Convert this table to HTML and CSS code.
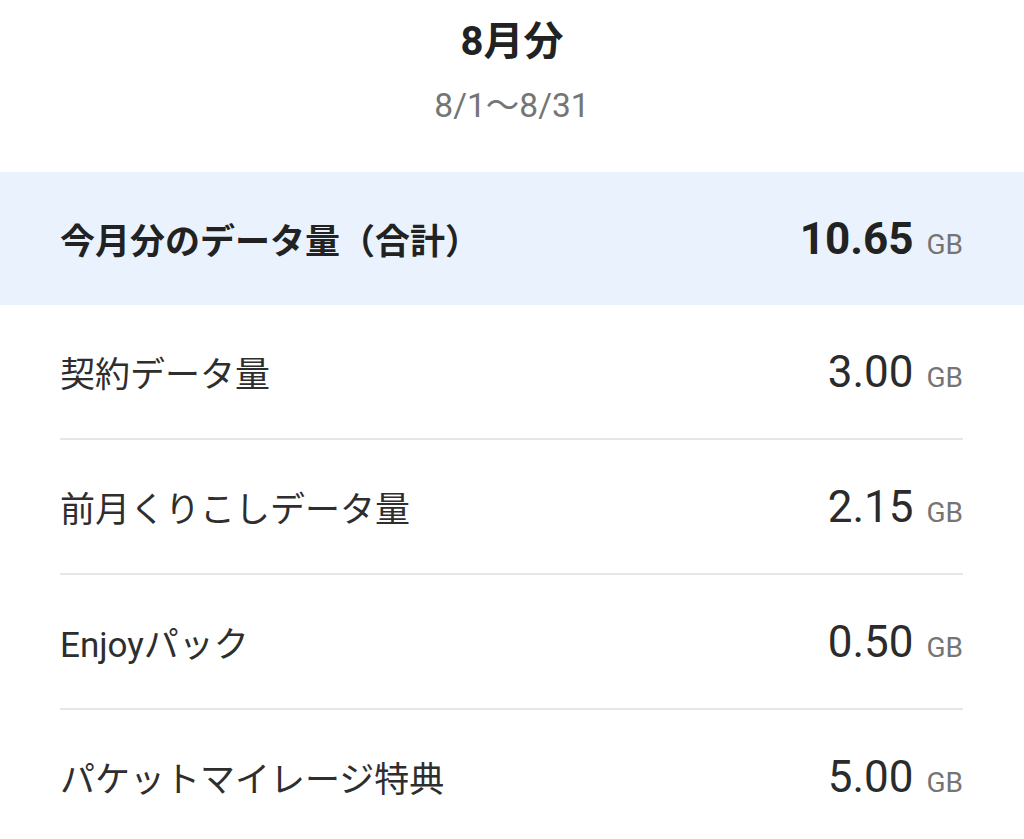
FILE: index.html
```html
<!DOCTYPE html>
<html lang="ja">
<head>
<meta charset="utf-8">
<link rel="stylesheet" href="styles.css">
</head>
<body>
<div class="page">
  <header class="head">
    <h1 class="title">8月分</h1>
    <p class="range">8/1〜8/31</p>
  </header>
  <div class="total">
    <span class="label-bold">今月分のデータ量（合計）</span>
    <span class="value"><b class="num-bold">10.65</b><span class="unit">GB</span></span>
  </div>
  <ul class="list">
    <li class="row"><span class="label">契約データ量</span><span class="value"><span class="num">3.00</span><span class="unit">GB</span></span></li>
    <li class="row"><span class="label">前月くりこしデータ量</span><span class="value"><span class="num">2.15</span><span class="unit">GB</span></span></li>
    <li class="row"><span class="label">Enjoyパック</span><span class="value"><span class="num">0.50</span><span class="unit">GB</span></span></li>
    <li class="row"><span class="label">パケットマイレージ特典</span><span class="value"><span class="num">5.00</span><span class="unit">GB</span></span></li>
  </ul>
</div>
</body>
</html>
```

FILE: styles.css
```css
html, body {
  margin: 0;
  padding: 0;
  background: #ffffff;
}
body {
  font-family: Roboto, "Noto Sans CJK JP", sans-serif;
  color: #2b2b2b;
  width: 1024px;
  height: 839px;
  overflow: hidden;
}
.head {
  display: flex;
  flex-direction: column;
  align-items: center;
  padding-top: 18px;
}
.title {
  margin: 0;
  font-size: 40px;
  line-height: 48px;
  font-weight: 700;
  color: #222;
}
.range {
  margin: 20px 0 0;
  font-size: 33.5px;
  line-height: 40px;
  color: #757575;
}
.total {
  margin-top: 46px;
  height: 133px;
  background: #eaf3fd;
  display: flex;
  align-items: center;
  justify-content: space-between;
  padding: 0 61px 0 60px;
}
.label-bold {
  font-size: 35px;
  font-weight: 700;
  color: #222;
}
.value {
  display: flex;
  align-items: baseline;
}
.num-bold {
  font-size: 44px;
  font-weight: 700;
  color: #222;
}
.num {
  font-size: 44px;
  color: #2b2b2b;
}
.unit {
  font-size: 28px;
  color: #757575;
  margin-left: 13px;
}
.list {
  list-style: none;
  margin: 0;
  padding: 0 61px 0 60px;
}
.row {
  height: 133px;
  border-bottom: 2px solid #e6e6e6;
  display: flex;
  align-items: center;
  justify-content: space-between;
}
.row:last-child {
  border-bottom: none;
}
.label {
  font-size: 35px;
  color: #2e2e2e;
}
```
